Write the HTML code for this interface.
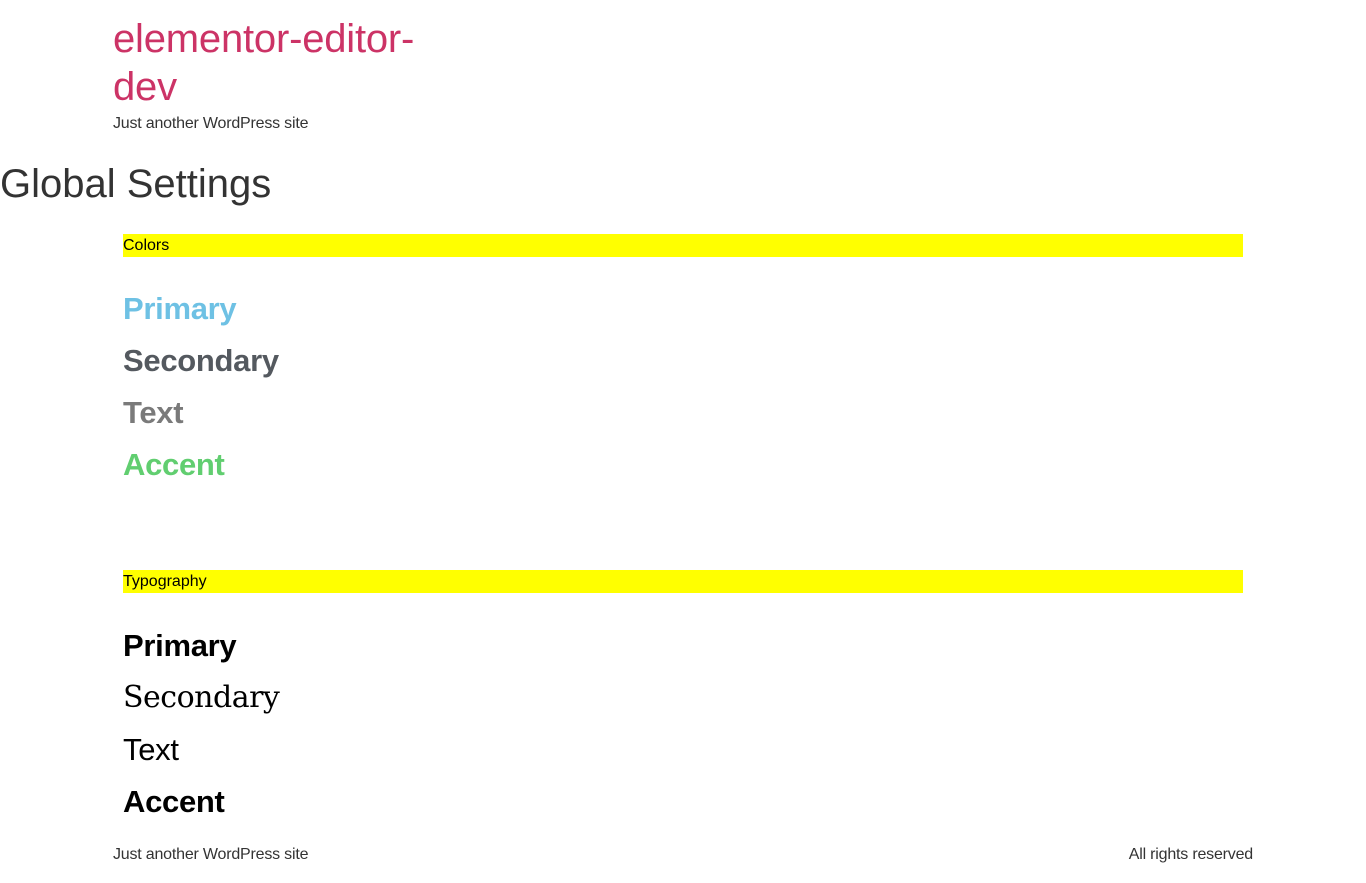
<!DOCTYPE html>
<html><head><meta charset="utf-8"><style>
body{margin:0;background:#fff;font-family:"Liberation Sans",sans-serif;color:#333;width:1366px;height:883px;position:relative;overflow:hidden}
.a{position:absolute;white-space:nowrap}
.t{left:113px;font-size:40px;color:#cc3366;line-height:48px;letter-spacing:-0.2px}
.bar{position:absolute;left:123px;width:1120px;height:23px;background:#ff0;color:#000;font-size:16px;line-height:23px}
.h{left:123px;font-size:31px;font-weight:bold;line-height:40px;letter-spacing:-0.3px}
.f{font-size:16px;letter-spacing:-0.2px}
</style></head><body>
<div class="a t" style="top:15px">elementor-editor-</div>
<div class="a t" style="top:63px">dev</div>
<div class="a f" style="left:113px;top:115px">Just another WordPress site</div>
<div class="a" style="left:0;top:160px;font-size:40px;line-height:48px">Global Settings</div>
<div class="bar" style="top:234px;line-height:24px">Colors</div>
<div class="a h" style="top:289px;color:#6ec1e4">Primary</div>
<div class="a h" style="top:341px;color:#54595f">Secondary</div>
<div class="a h" style="top:393px;color:#7a7a7a">Text</div>
<div class="a h" style="top:445px;color:#61ce70">Accent</div>
<div class="bar" style="top:570px;line-height:24px">Typography</div>
<div class="a h" style="top:626px;color:#000">Primary</div>
<div class="a h" style="top:678px;color:#000;font-weight:normal;font-family:'DejaVu Serif','Liberation Serif',serif;font-size:30px;letter-spacing:-0.5px">Secondary</div>
<div class="a h" style="top:730px;color:#000;font-weight:normal">Text</div>
<div class="a h" style="top:782px;color:#000">Accent</div>
<div class="a f" style="left:113px;top:846px">Just another WordPress site</div>
<div class="a f" style="right:113px;top:846px">All rights reserved</div>
</body></html>
